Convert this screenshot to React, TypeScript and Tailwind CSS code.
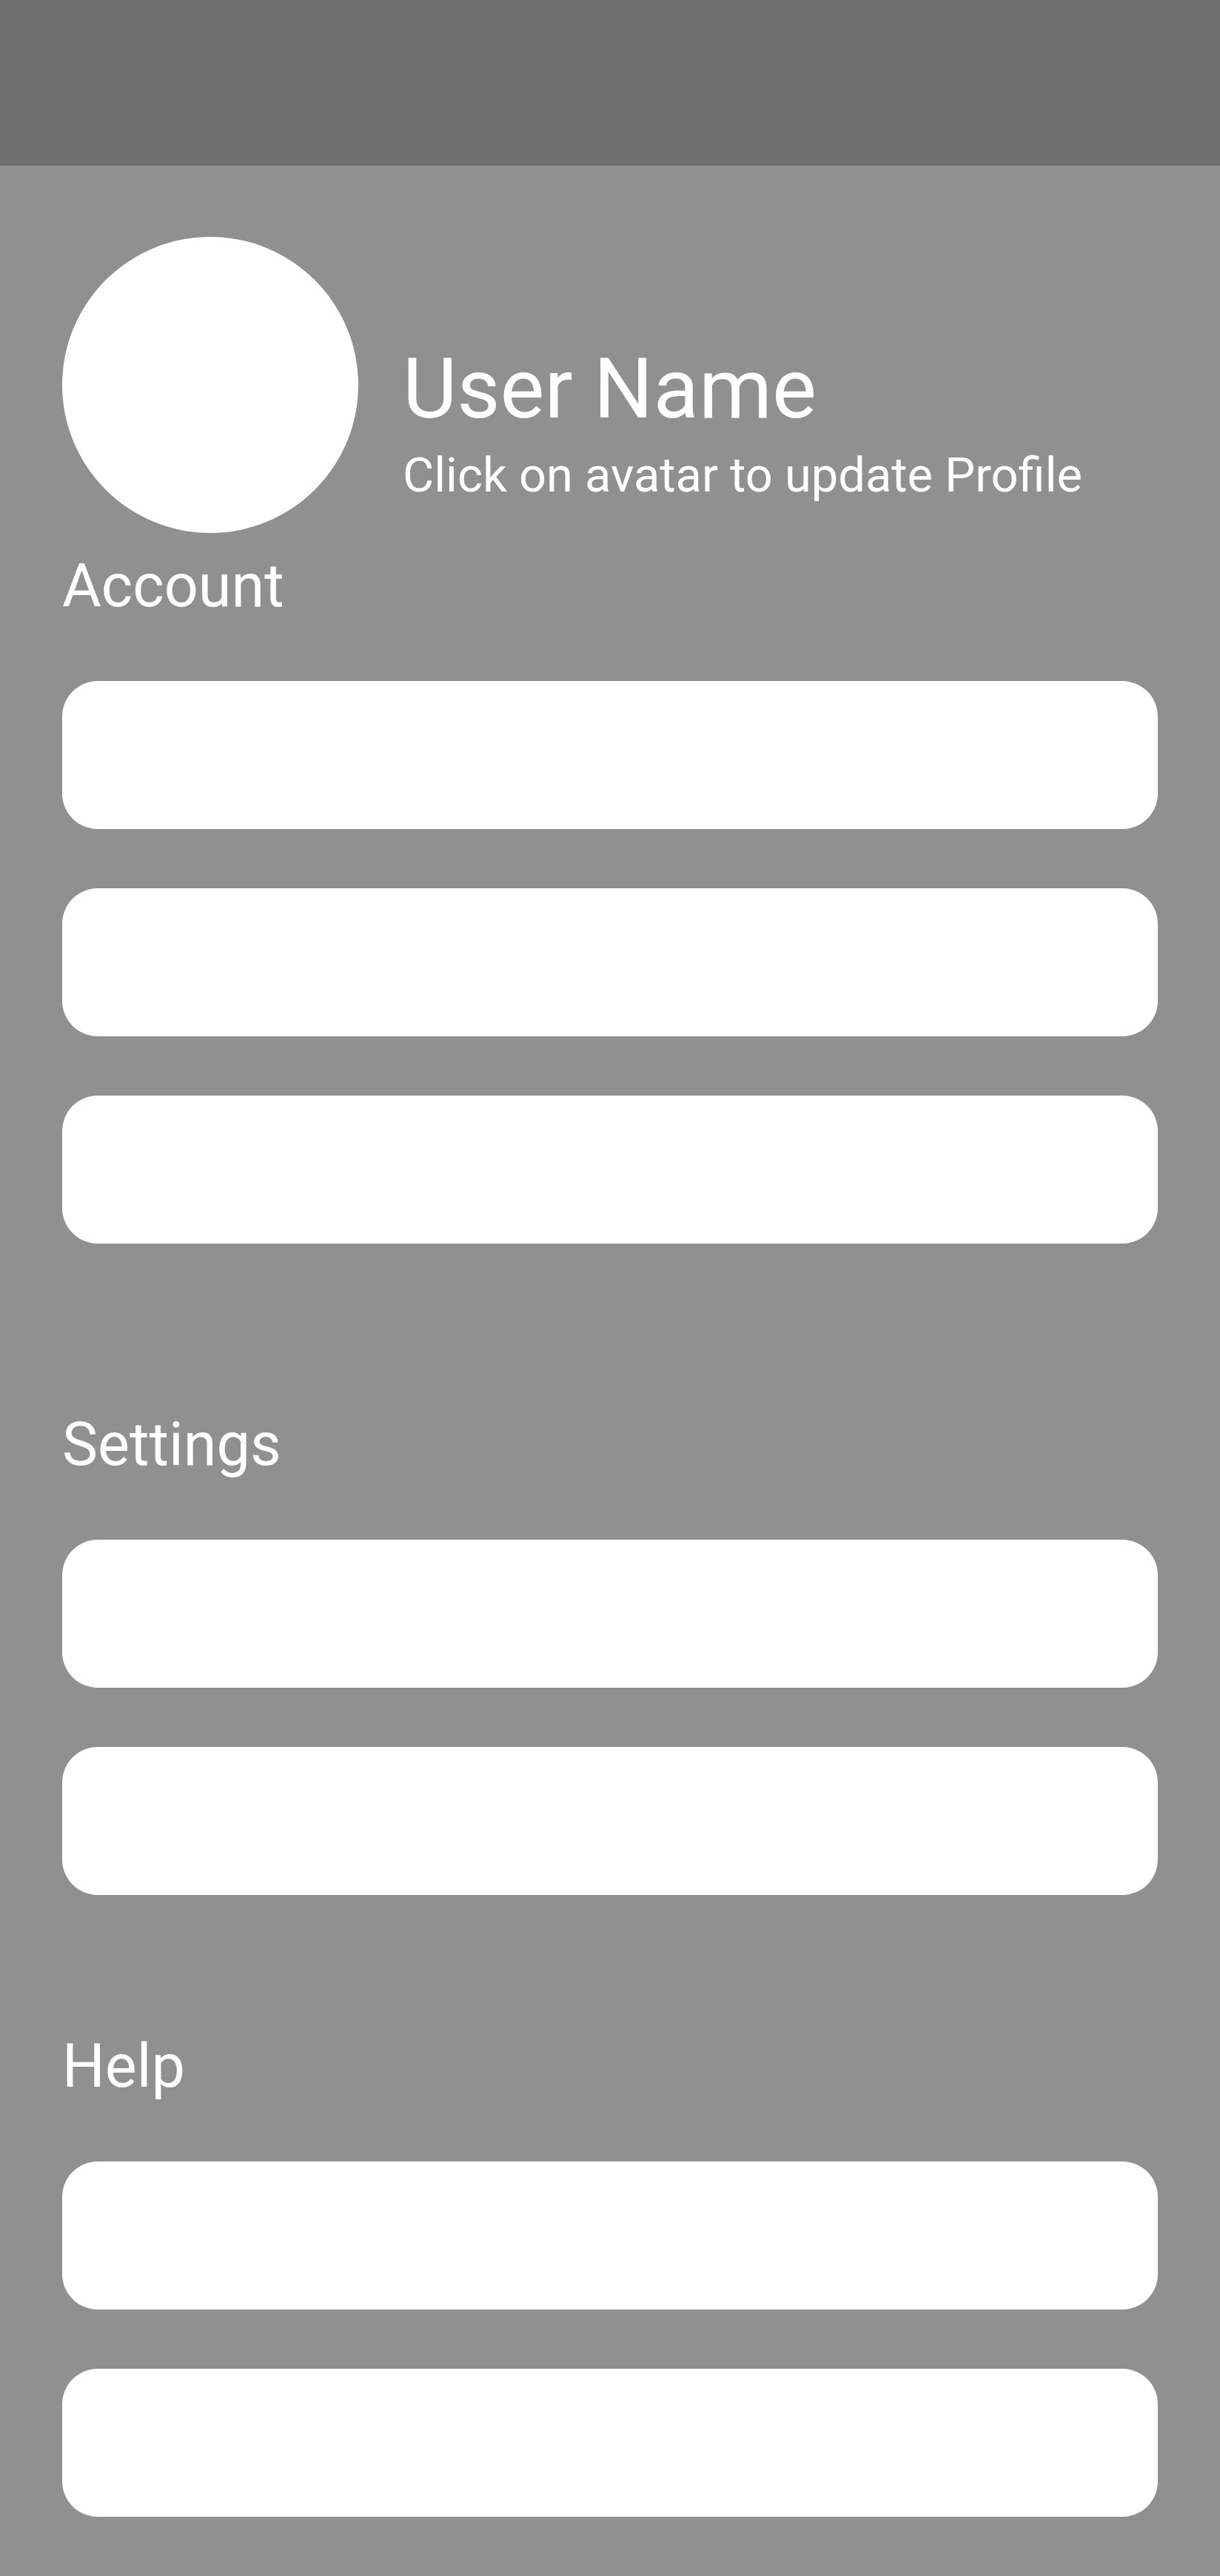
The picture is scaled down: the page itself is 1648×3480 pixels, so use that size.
import React from "react";

function Section({ title, items, className }: { title: string; items: string[]; className: string }) {
  return (
    <section className={className}>
      <h2 className="text-[81px] leading-[96px]">{title}</h2>
      <div className="mt-20 flex flex-col gap-20">
        {items.map((label) => (
          <button key={label} type="button" aria-label={label} className="h-[200px] w-full rounded-[48px] bg-white" />
        ))}
      </div>
    </section>
  );
}

export default function App() {
  return (
    <div className="min-h-screen bg-[#909090] font-['Roboto',sans-serif] text-white">
      <header className="h-56 bg-[#707070]" />
      <main className="px-[84px] pt-24 pb-20">
        <div className="flex items-start gap-[60px]">
          <button type="button" aria-label="Update profile" className="size-[400px] shrink-0 rounded-full bg-white" />
          <div className="pt-[140px]">
            <h1 className="text-[113px] leading-[132px]">User Name</h1>
            <p className="text-[65px] leading-[100px]">Click on avatar to update Profile</p>
          </div>
        </div>
        <Section title="Account" items={["Account option 1", "Account option 2", "Account option 3"]} className="mt-6" />
        <Section title="Settings" items={["Settings option 1", "Settings option 2"]} className="mt-[224px]" />
        <Section title="Help" items={["Help option 1", "Help option 2"]} className="mt-[184px]" />
      </main>
    </div>
  );
}
